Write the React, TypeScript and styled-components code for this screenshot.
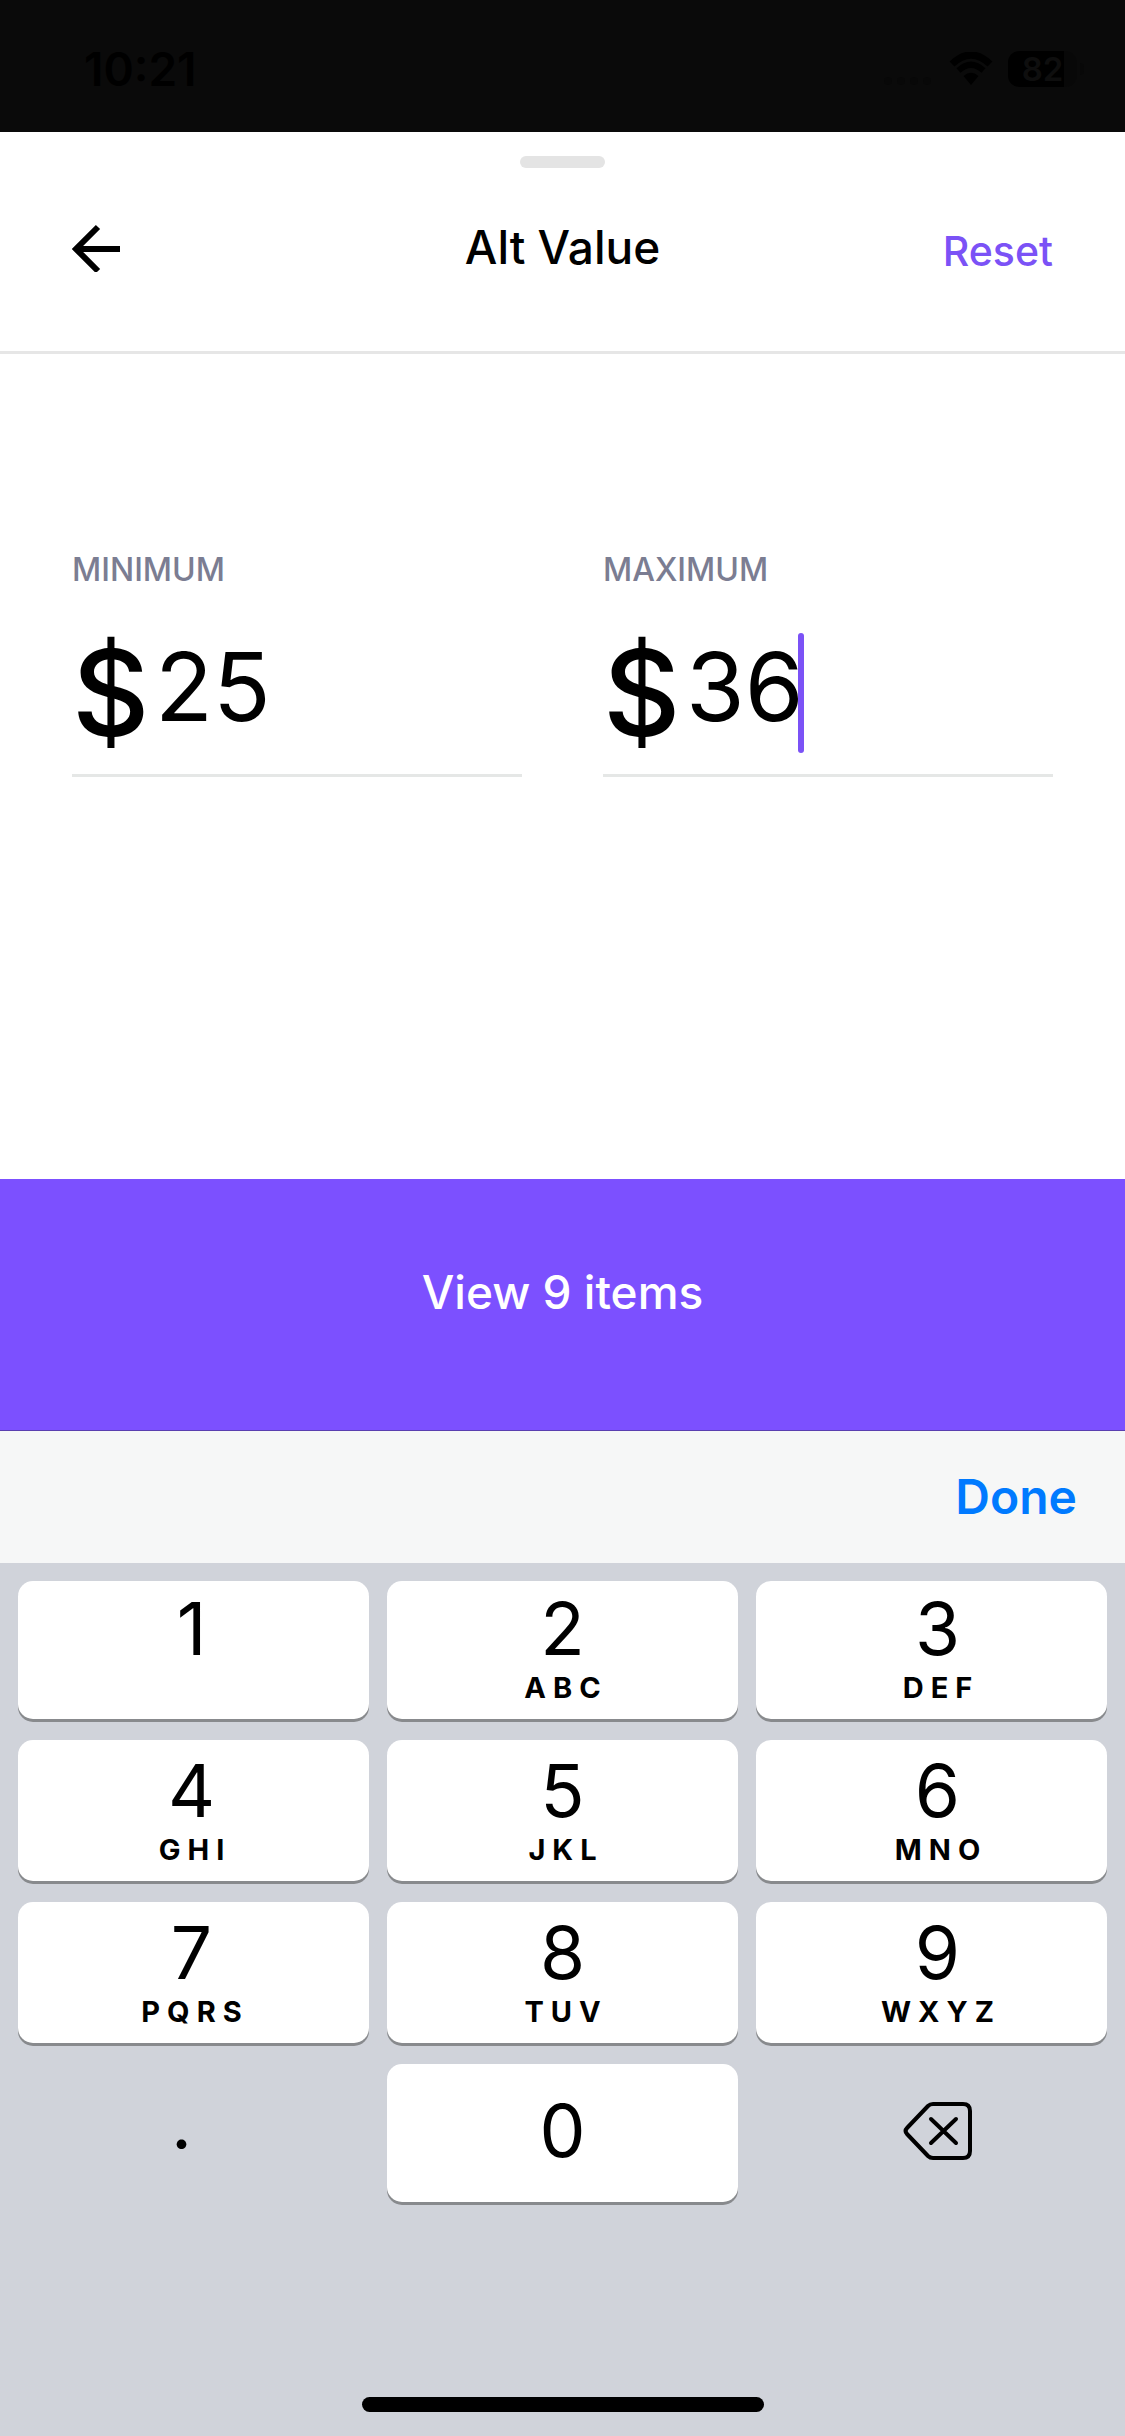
import React, { useState } from "react";
import styled, { createGlobalStyle } from "styled-components";

const GlobalStyle = createGlobalStyle`
  *, *::before, *::after { box-sizing: border-box; }
  html, body, #root { height: 100%; }
  body {
    margin: 0;
    background: #ffffff;
    color: #000000;
    font-family: Inter, "Liberation Sans", sans-serif;
  }
  button, input {
    margin: 0;
    padding: 0;
    border: 0;
    background: none;
    color: inherit;
    font: inherit;
  }
  button { cursor: pointer; }
`;

const Screen = styled.div`
  display: flex;
  flex-direction: column;
  min-height: 100%;
`;

const StatusBar = styled.div`
  display: flex;
  justify-content: space-between;
  align-items: center;
  height: 132px;
  padding: 6px 41px 0 84px;
  background: #0a0a0a;
  color: #000000;
`;

const Clock = styled.time`
  font-size: 46px;
  line-height: 56px;
  font-weight: 600;
`;

const StatusIcons = styled.div`
  display: flex;
  align-items: center;
  gap: 15px;
`;

const Battery = styled.div`
  display: flex;
  align-items: center;
  gap: 3px;
`;

const BatteryBody = styled.div`
  width: 69px;
  height: 36px;
  border-radius: 11px;
  background: linear-gradient(to right, #000000 81%, #080808 81%);
  color: #0e0e0e;
  font-size: 33px;
  line-height: 36px;
  font-weight: 600;
  text-align: center;
`;

const BatteryCap = styled.div`
  width: 4px;
  height: 12px;
  border-radius: 0 4px 4px 0;
  background: #080808;
`;

const Sheet = styled.main`
  display: flex;
  flex-direction: column;
  flex: 1;
`;

const Handle = styled.div`
  align-self: center;
  width: 85px;
  height: 12px;
  margin-top: 24px;
  border-radius: 6px;
  background: #e4e4e4;
`;

const Header = styled.header`
  display: grid;
  grid-template-columns: 1fr auto 1fr;
  align-items: center;
  height: 186px;
  padding: 0 72px 24px;
  border-bottom: 3px solid #e6e6e6;
`;

const BackButton = styled.button`
  display: flex;
  justify-self: start;
`;

const Title = styled.h1`
  margin: 0;
  padding-bottom: 2px;
  font-size: 46px;
  line-height: 60px;
  font-weight: 500;
`;

const ResetButton = styled.button`
  justify-self: end;
  padding-top: 6px;
  color: #7b52f6;
  font-size: 41px;
  line-height: 60px;
  font-weight: 500;
`;

const Fields = styled.div`
  display: grid;
  grid-template-columns: 1fr 1fr;
  gap: 81px;
  flex: 1;
  align-content: start;
  padding: 192px 72px 96px;
`;

const Field = styled.div`
  display: flex;
  flex-direction: column;
  border-bottom: 3px solid #e5e7e6;
`;

const FieldLabel = styled.label`
  color: #7b7d92;
  font-size: 32px;
  line-height: 48px;
  font-weight: 500;
`;

const Amount = styled.div`
  display: flex;
  align-items: center;
  height: 180px;
  padding-top: 18px;
`;

const Currency = styled.span`
  width: 83px;
  font-size: 120px;
  line-height: 120px;
  font-weight: 500;
`;

const AmountInput = styled.input`
  min-width: 0;
  padding-bottom: 12px;
  field-sizing: content;
  outline: none;
  font-size: 95px;
  line-height: 120px;
  caret-color: #7b52f6;
`;

const Caret = styled.span`
  width: 6px;
  height: 120px;
  margin-left: -6px;
  border-radius: 3px;
  background: #7b52f6;
`;

const ViewButton = styled.button`
  height: 252px;
  padding-bottom: 26px;
  border-bottom: 1px solid #5a3fb0;
  background: #7c50ff;
  color: #ffffff;
  font-size: 46px;
  line-height: 60px;
  font-weight: 500;
`;

const Accessory = styled.div`
  display: flex;
  justify-content: flex-end;
  align-items: center;
  height: 132px;
  padding: 0 48px;
  background: #f6f7f7;
`;

const DoneButton = styled.button`
  color: #007aff;
  font-size: 48px;
  line-height: 60px;
  font-weight: 600;
`;

const Keyboard = styled.div`
  display: flex;
  flex-direction: column;
  align-items: center;
  padding-bottom: 24px;
  background: #d0d3da;
`;

const Keys = styled.div`
  display: grid;
  grid-template-columns: repeat(3, 1fr);
  grid-template-rows: 138px 141px 141px 138px;
  gap: 21px 18px;
  align-self: stretch;
  padding: 18px 18px 195px;
`;

const Key = styled.button`
  display: flex;
  flex-direction: column;
  align-items: center;
  padding-top: 12px;
  border-radius: 15px;
  background: #ffffff;
  box-shadow: 0 3px 0 #888a8d;

  &:nth-child(n + 4) { padding-top: 15px; }
  &:nth-child(3n + 1) { padding-right: 4px; }
  &:nth-child(3n) { padding-left: 12px; }
`;

const BottomKey = styled(Key)`
  &:nth-child(n) {
    justify-content: center;
    padding-top: 0;
    padding-bottom: 4px;
  }
`;

const PlainKey = styled(BottomKey)`
  background: transparent;
  box-shadow: none;
`;

const PointKey = styled(PlainKey)`
  &:nth-child(n) {
    padding-right: 24px;
    padding-bottom: 20px;
  }
`;

const Digit = styled.span`
  font-size: 73px;
  line-height: 72px;
`;

const Letters = styled.span`
  padding-left: 7px;
  font-size: 29px;
  line-height: 46px;
  font-weight: 700;
  letter-spacing: 7px;
`;

const HomeIndicator = styled.div`
  width: 402px;
  height: 15px;
  border-radius: 8px;
  background: #000000;
`;

const keys: [string, string][] = [
  ["1", ""], ["2", "ABC"], ["3", "DEF"],
  ["4", "GHI"], ["5", "JKL"], ["6", "MNO"],
  ["7", "PQRS"], ["8", "TUV"], ["9", "WXYZ"],
];

const SignalIcon = () => (
  <svg width="50" height="36" viewBox="0 0 50 36" fill="#080808" aria-hidden="true">
    <circle cx="4" cy="30" r="4" /><circle cx="17" cy="30" r="4" />
    <circle cx="30" cy="30" r="4" /><circle cx="43" cy="30" r="4" />
  </svg>
);

const WifiIcon = () => (
  <svg width="44" height="34" viewBox="0 0 44 34" fill="none" stroke="#000" aria-hidden="true">
    <path d="M3 12 Q22 -6 41 12" strokeWidth="7" />
    <path d="M9.500 18.500 Q22 7 34.500 18.500" strokeWidth="6" />
    <path d="M14.500 24 Q22 17.500 29.500 24 L22 33 Z" fill="#000" stroke="none" />
  </svg>
);

const BackIcon = () => (
  <svg width="48" height="48" viewBox="0 0 48 48" fill="none" stroke="#000" strokeWidth="6" aria-hidden="true">
    <path d="M48 25H4M26 3L4 25L26 47" />
  </svg>
);

const DeleteIcon = () => (
  <svg width="70" height="60" viewBox="0 0 70 60" fill="none" stroke="#000" strokeWidth="4" strokeLinecap="round" strokeLinejoin="round" aria-hidden="true">
    <path d="M30 3H60Q67 3 67 10V50Q67 57 60 57H30Q27 57 25 55L4 33Q1 30 4 27L25 5Q27 3 30 3Z" />
    <path d="M28 18L53 42M53 18L28 42" />
  </svg>
);

export default function App() {
  const [min, setMin] = useState("25");
  const [max, setMax] = useState("36");
  const press = (k: string) => setMax((v) => v + k);

  return (
    <Screen>
      <GlobalStyle />
      <StatusBar>
        <Clock>10:21</Clock>
        <StatusIcons>
          <SignalIcon />
          <WifiIcon />
          <Battery>
            <BatteryBody>82</BatteryBody>
            <BatteryCap />
          </Battery>
        </StatusIcons>
      </StatusBar>
      <Sheet>
        <Handle />
        <Header>
          <BackButton type="button" aria-label="Back"><BackIcon /></BackButton>
          <Title>Alt Value</Title>
          <ResetButton type="button" onClick={() => { setMin(""); setMax(""); }}>Reset</ResetButton>
        </Header>
        <Fields>
          <Field>
            <FieldLabel htmlFor="min">MINIMUM</FieldLabel>
            <Amount>
              <Currency>$</Currency>
              <AmountInput id="min" inputMode="decimal" value={min} onChange={(e) => setMin(e.target.value)} />
            </Amount>
          </Field>
          <Field>
            <FieldLabel htmlFor="max">MAXIMUM</FieldLabel>
            <Amount>
              <Currency>$</Currency>
              <AmountInput id="max" inputMode="decimal" value={max} onChange={(e) => setMax(e.target.value)} />
              <Caret />
            </Amount>
          </Field>
        </Fields>
        <ViewButton type="button">View 9 items</ViewButton>
      </Sheet>
      <Accessory>
        <DoneButton type="button">Done</DoneButton>
      </Accessory>
      <Keyboard>
        <Keys>
          {keys.map(([digit, letters]) => (
            <Key key={digit} type="button" onClick={() => press(digit)}>
              <Digit>{digit}</Digit>
              {letters && <Letters>{letters}</Letters>}
            </Key>
          ))}
          <PointKey type="button" onClick={() => press(".")}><Digit>.</Digit></PointKey>
          <BottomKey type="button" onClick={() => press("0")}><Digit>0</Digit></BottomKey>
          <PlainKey type="button" aria-label="Delete" onClick={() => setMax((v) => v.slice(0, -1))}><DeleteIcon /></PlainKey>
        </Keys>
        <HomeIndicator />
      </Keyboard>
    </Screen>
  );
}
